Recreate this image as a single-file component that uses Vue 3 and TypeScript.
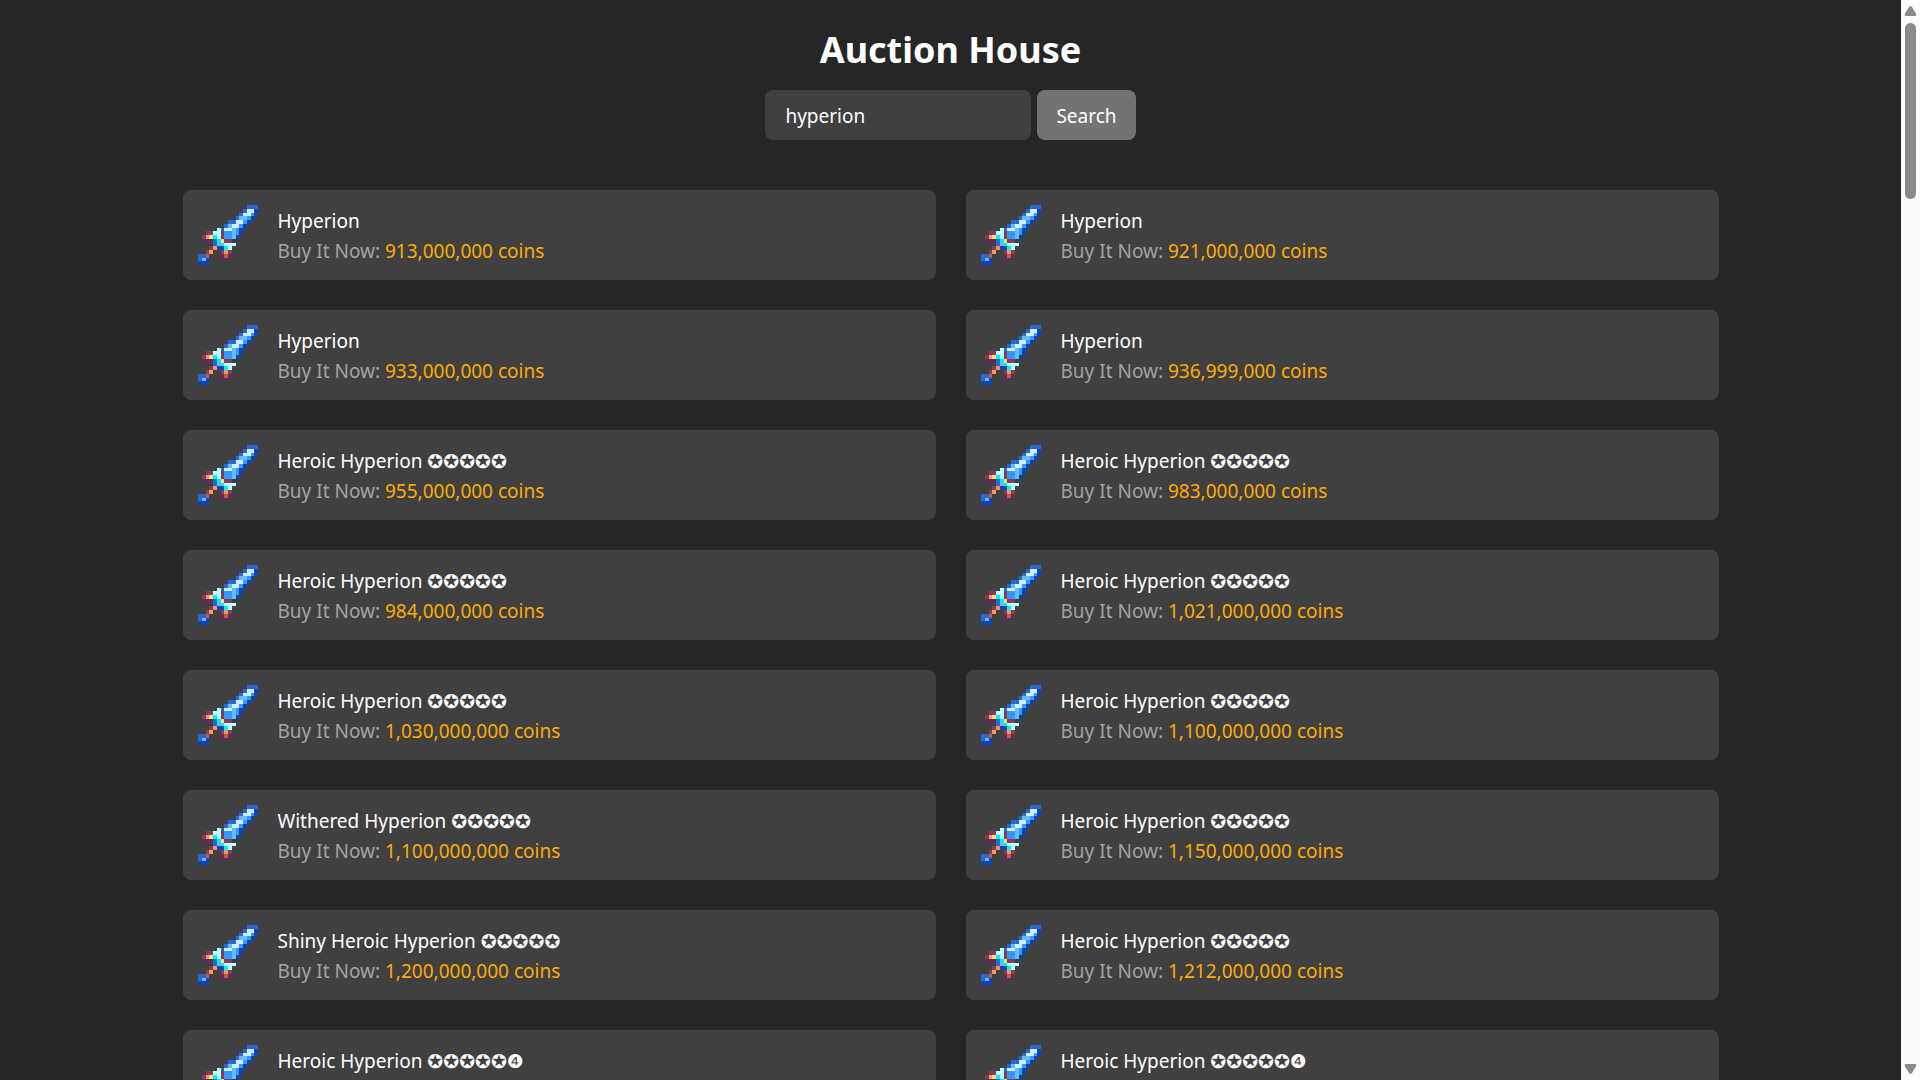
<script setup lang="ts">
import { ref } from 'vue'

interface Auction {
  name: string
  stars?: string
  price?: string
}

const query = ref('hyperion')

const auctions: Auction[] = [
  { name: 'Hyperion', price: '913,000,000' },
  { name: 'Hyperion', price: '921,000,000' },
  { name: 'Hyperion', price: '933,000,000' },
  { name: 'Hyperion', price: '936,999,000' },
  { name: 'Heroic Hyperion', stars: '✪✪✪✪✪', price: '955,000,000' },
  { name: 'Heroic Hyperion', stars: '✪✪✪✪✪', price: '983,000,000' },
  { name: 'Heroic Hyperion', stars: '✪✪✪✪✪', price: '984,000,000' },
  { name: 'Heroic Hyperion', stars: '✪✪✪✪✪', price: '1,021,000,000' },
  { name: 'Heroic Hyperion', stars: '✪✪✪✪✪', price: '1,030,000,000' },
  { name: 'Heroic Hyperion', stars: '✪✪✪✪✪', price: '1,100,000,000' },
  { name: 'Withered Hyperion', stars: '✪✪✪✪✪', price: '1,100,000,000' },
  { name: 'Heroic Hyperion', stars: '✪✪✪✪✪', price: '1,150,000,000' },
  { name: 'Shiny Heroic Hyperion', stars: '✪✪✪✪✪', price: '1,200,000,000' },
  { name: 'Heroic Hyperion', stars: '✪✪✪✪✪', price: '1,212,000,000' },
  { name: 'Heroic Hyperion', stars: '✪✪✪✪✪❹' },
  { name: 'Heroic Hyperion', stars: '✪✪✪✪✪❹' },
]

// 16x16 sword sprite, one letter per pixel
const sprite: string[] = [
  '.............bbb',
  '............bwwd',
  '...........bwwmd',
  '..........bssmd.',
  '........bbwwmd..',
  '.......bswwmd...',
  '.....pbwwsmd....',
  '..rrpprmmsmd....',
  '.roycprmmsd.....',
  '.uuubcyrr.......',
  '....bscppp......',
  '...roddcp.......',
  '..ro..ror.......',
  'bbt...utu.......',
  'bsd...uu........',
  'ddd.............',
]

const palette: Record<string, string> = {
  b: '#2468d0',
  d: '#1044b0',
  m: '#3399ff',
  s: '#66bbff',
  w: '#cceeff',
  p: '#bbffff',
  c: '#00eeff',
  r: '#8a3a58',
  u: '#602c58',
  o: '#f09858',
  y: '#ffe070',
  t: '#b85a50',
}

const pixels = sprite.flatMap((row, y) =>
  [...row].flatMap((key, x) => (key === '.' ? [] : [{ x, y, fill: palette[key] }])),
)
</script>

<template>
  <div class="app">
    <main class="page">
      <h1>Auction House</h1>
      <form class="search" @submit.prevent>
        <input v-model="query" type="text" aria-label="Search auctions" />
        <button type="submit">Search</button>
      </form>
      <ul class="grid">
        <li v-for="(auction, i) in auctions" :key="i" class="card">
          <svg class="sword" viewBox="0 0 16 16" shape-rendering="crispEdges" aria-hidden="true">
            <rect v-for="(p, n) in pixels" :key="n" :x="p.x" :y="p.y" width="1" height="1" :fill="p.fill" />
          </svg>
          <div class="info">
            <p class="name">{{ auction.name }} <span v-if="auction.stars" class="stars">{{ auction.stars }}</span></p>
            <p v-if="auction.price" class="price">Buy It Now: <span class="coins">{{ auction.price }} coins</span></p>
          </div>
        </li>
      </ul>
    </main>
    <div class="scrollbar" aria-hidden="true">
      <svg class="arrow" viewBox="0 0 13 10"><path d="M5 1Q6.500 -1 8 1L12 7.500Q13 10 11 10H2Q0 10 1 7.500Z" fill="#8b8b8b" /></svg>
      <div class="track"><div class="thumb"></div></div>
      <svg class="arrow" viewBox="0 0 13 10"><path d="M5 9Q6.500 11 8 9L12 2.500Q13 0 11 0H2Q0 0 1 2.500Z" fill="#8b8b8b" /></svg>
    </div>
  </div>
</template>

<style>
body {
  margin: 0;
  background: #262626;
}
</style>

<style scoped>
.app {
  display: flex;
  height: 100vh;
  overflow: hidden;
  background: #262626;
  color: #fff;
  font-family: "Noto Sans", "DejaVu Sans", sans-serif;
  font-size: 19px;
  line-height: 30px;
}

.page {
  flex: 1;
  min-width: 0;
  overflow-y: auto;
  scrollbar-width: none;
  padding: 20px 20px 0;
}

h1 {
  margin: 0 0 10px;
  font-size: 36px;
  line-height: 60px;
  font-weight: 700;
  text-align: center;
}

.search {
  display: flex;
  justify-content: center;
  gap: 6px;
  margin-bottom: 50px;
}

input,
button {
  box-sizing: border-box;
  height: 50px;
  border: 0;
  border-radius: 8px;
  padding: 2px 20px 0;
  color: #fff;
  font: inherit;
  outline: none;
}

input {
  width: 266px;
  background: #404040;
}

button {
  padding: 2px 19px 0;
  background: #737373;
}

.grid {
  display: grid;
  grid-template-columns: 1fr 1fr;
  gap: 30px;
  max-width: 1536px;
  margin: 0 auto;
  padding: 0;
  list-style: none;
}

.card {
  display: flex;
  gap: 20px;
  height: 60px;
  padding: 15px;
  border-radius: 8px;
  background: #404040;
}

.sword {
  flex: none;
  width: 60px;
  height: 60px;
}

.info {
  padding-top: 1px;
}

p {
  margin: 0;
}

.stars {
  font-family: "DejaVu Sans", sans-serif;
}

.price {
  color: #a3a3a3;
}

.coins {
  color: #ffaa00;
}

.scrollbar {
  display: flex;
  flex-direction: column;
  align-items: center;
  flex: none;
  box-sizing: border-box;
  width: 19px;
  padding: 6px 0;
  background: #fcfcfc;
}

.arrow {
  width: 13px;
  height: 10px;
}

.track {
  flex: 1;
  padding-top: 7px;
}

.thumb {
  width: 11px;
  height: 176px;
  border-radius: 6px;
  background: #8b8b8b;
}
</style>
